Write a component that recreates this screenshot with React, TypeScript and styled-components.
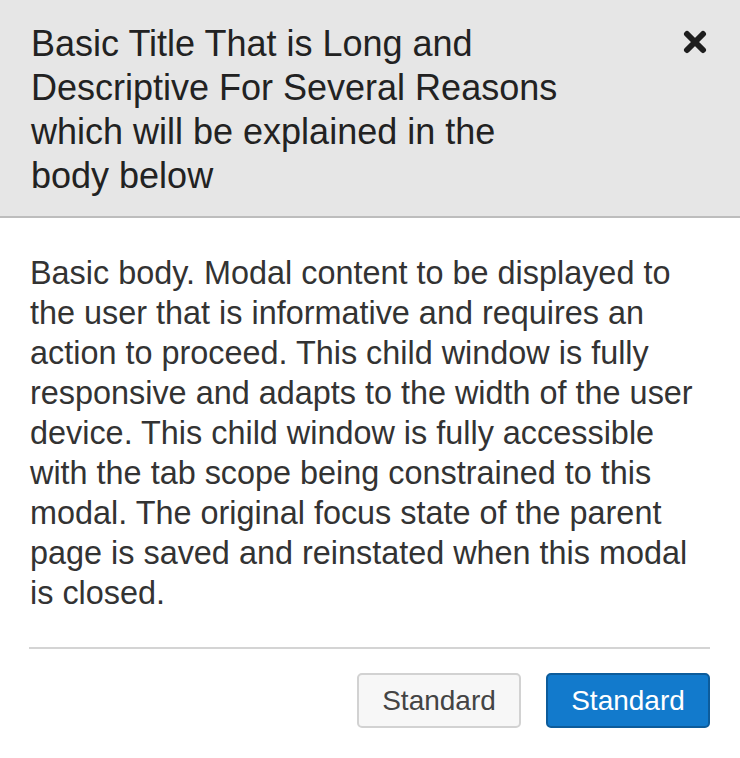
import styled, { createGlobalStyle } from "styled-components";

const GlobalStyle = createGlobalStyle`
  html, body {
    margin: 0;
    padding: 0;
    background: #ffffff;
  }
  body {
    font-family: "Liberation Sans", Arial, Helvetica, sans-serif;
  }
`;

const Modal = styled.div`
  width: 740px;
  min-height: 758px;
  background: #ffffff;
  display: flex;
  flex-direction: column;
`;

const Header = styled.header`
  display: flex;
  align-items: flex-start;
  justify-content: space-between;
  background: #e6e6e6;
  border-bottom: 2px solid #bdbdbd;
  padding: 22px 30px 18px 31px;
`;

const Title = styled.h2`
  margin: 0;
  max-width: 540px;
  font-size: 36px;
  line-height: 44px;
  font-weight: 400;
  color: #222222;
`;

const CloseButton = styled.button`
  border: none;
  background: transparent;
  padding: 0;
  margin: 8px 3px 0 0;
  width: 24px;
  height: 24px;
  cursor: pointer;
  display: flex;
  align-items: center;
  justify-content: center;
`;

const Body = styled.div`
  padding: 35px 30px 0 30px;
`;

const Text = styled.p`
  margin: 0;
  font-size: 32.4px;
  line-height: 40px;
  color: #333333;
`;

const Footer = styled.footer`
  margin: 34px 30px 0 29px;
  padding-top: 24px;
  border-top: 2px solid #d4d4d4;
  display: flex;
  justify-content: flex-end;
  gap: 25px;
`;

const Button = styled.button<{ $primary?: boolean }>`
  height: 55px;
  width: 164px;
  padding: 0;
  border-radius: 5px;
  font-family: "Liberation Sans", Arial, sans-serif;
  font-size: 28px;
  cursor: pointer;
  border: 2px solid ${(p) => (p.$primary ? "#0d5c9b" : "#d2d2d2")};
  background: ${(p) => (p.$primary ? "#127acc" : "#f7f7f7")};
  color: ${(p) => (p.$primary ? "#ffffff" : "#444444")};
`;

const CloseIcon = () => (
  <svg width="24" height="24" viewBox="0 0 24 24" aria-hidden="true">
    <path
      d="M4 4 L20 20 M20 4 L4 20"
      stroke="#1e1e1e"
      strokeWidth="6"
      strokeLinecap="round"
      fill="none"
    />
  </svg>
);

export default function App() {
  return (
    <>
      <GlobalStyle />
      <Modal>
        <Header>
          <Title>
            Basic Title That is Long and Descriptive For Several Reasons which will be explained in
            the body below
          </Title>
          <CloseButton aria-label="Close">
            <CloseIcon />
          </CloseButton>
        </Header>
        <Body>
          <Text>
            Basic body. Modal content to be displayed to the user that is informative and requires
            an action to proceed. This child window is fully responsive and adapts to the width of
            the user device. This child window is fully accessible with the tab scope being
            constrained to this modal. The original focus state of the parent page is saved and
            reinstated when this modal is closed.
          </Text>
        </Body>
        <Footer>
          <Button>Standard</Button>
          <Button $primary>Standard</Button>
        </Footer>
      </Modal>
    </>
  );
}
